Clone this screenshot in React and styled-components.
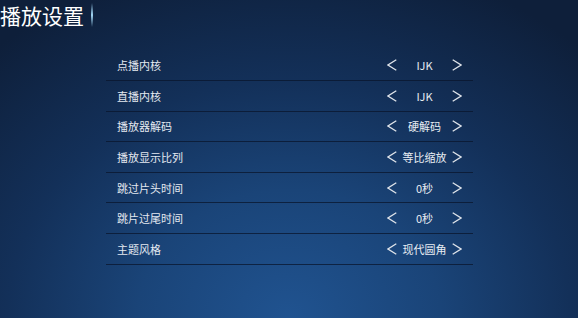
import styled, { createGlobalStyle } from "styled-components";

const GlobalStyle = createGlobalStyle`
  html, body {
    margin: 0;
    padding: 0;
  }
  body {
    font-family: "Noto Sans CJK SC", "Noto Sans", sans-serif;
  }
`;

const Page = styled.div`
  width: 578px;
  height: 318px;
  overflow: hidden;
  background: radial-gradient(
    ellipse 75% 115% at 50% 100%,
    #205390 0%,
    #1a4478 35%,
    #133059 65%,
    #0e1f3a 100%
  );
  color: #e8edf3;
`;

const Header = styled.div`
  display: flex;
  align-items: center;
  height: 30px;
`;

const Title = styled.h1`
  margin: 0;
  font-size: 21px;
  font-weight: 400;
  line-height: 30px;
  color: #ffffff;
  letter-spacing: 0;
`;

const TitleBar = styled.span`
  width: 2px;
  height: 24px;
  margin-left: 7px;
  background: linear-gradient(
    to bottom,
    rgba(120, 200, 255, 0) 0%,
    rgba(170, 225, 255, 0.95) 50%,
    rgba(120, 200, 255, 0) 100%
  );
`;

const List = styled.div`
  width: 367px;
  margin: 20.5px 0 0 106px;
`;

const Row = styled.div`
  display: flex;
  align-items: center;
  justify-content: space-between;
  height: 29.6px;
  padding: 0 11px;
  border-bottom: 1px solid rgba(9, 22, 44, 0.75);
`;

const Label = styled.span`
  font-size: 11px;
  color: #e4e9f0;
`;

const Switcher = styled.div`
  display: flex;
  align-items: center;
`;

const Value = styled.span`
  width: 55px;
  text-align: center;
  font-size: 11px;
  color: #e8edf3;
  white-space: nowrap;
`;

const Arrow = ({ dir }) => (
  <svg width="10" height="12" viewBox="0 0 10 12">
    <polyline
      points={dir === "left" ? "9.3,0.8 1,6 9.3,11.2" : "0.7,0.8 9,6 0.7,11.2"}
      fill="none"
      stroke="#dfe4ea"
      strokeWidth="1.3"
      strokeLinejoin="miter"
    />
  </svg>
);

const settings = [
  { label: "点播内核", value: "IJK" },
  { label: "直播内核", value: "IJK" },
  { label: "播放器解码", value: "硬解码" },
  { label: "播放显示比列", value: "等比缩放" },
  { label: "跳过片头时间", value: "0秒" },
  { label: "跳片过尾时间", value: "0秒" },
  { label: "主题风格", value: "现代圆角" },
];

export default function App() {
  return (
    <>
      <GlobalStyle />
      <Page>
        <Header>
          <Title>播放设置</Title>
          <TitleBar />
        </Header>
        <List>
          {settings.map((s) => (
            <Row key={s.label}>
              <Label>{s.label}</Label>
              <Switcher>
                <Arrow dir="left" />
                <Value>{s.value}</Value>
                <Arrow dir="right" />
              </Switcher>
            </Row>
          ))}
        </List>
      </Page>
    </>
  );
}
